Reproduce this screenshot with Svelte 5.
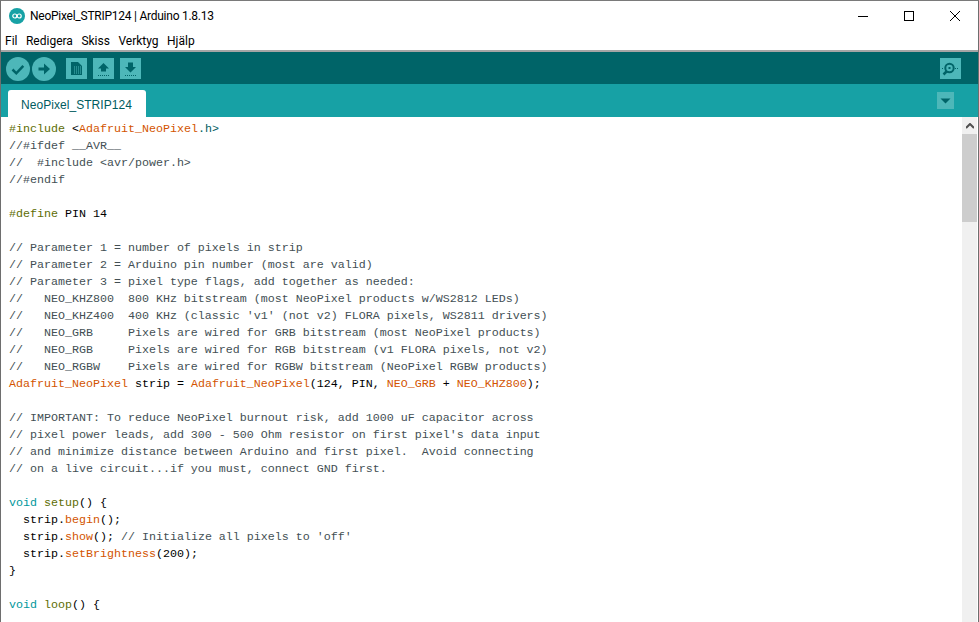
<script>
  const c = 'c', k = 'k', f = 'f', s = 's', v = 'v', t = 't';

  const code = [
    [[k, '#include'], [t, ' <'], [f, 'Adafruit_NeoPixel'], [s, '.h>']],
    [[c, '//#ifdef __AVR__']],
    [[c, '//  #include <avr/power.h>']],
    [[c, '//#endif']],
    [],
    [[k, '#define'], [t, ' PIN 14']],
    [],
    [[c, '// Parameter 1 = number of pixels in strip']],
    [[c, '// Parameter 2 = Arduino pin number (most are valid)']],
    [[c, '// Parameter 3 = pixel type flags, add together as needed:']],
    [[c, '//   NEO_KHZ800  800 KHz bitstream (most NeoPixel products w/WS2812 LEDs)']],
    [[c, "//   NEO_KHZ400  400 KHz (classic 'v1' (not v2) FLORA pixels, WS2811 drivers)"]],
    [[c, '//   NEO_GRB     Pixels are wired for GRB bitstream (most NeoPixel products)']],
    [[c, '//   NEO_RGB     Pixels are wired for RGB bitstream (v1 FLORA pixels, not v2)']],
    [[c, '//   NEO_RGBW    Pixels are wired for RGBW bitstream (NeoPixel RGBW products)']],
    [[f, 'Adafruit_NeoPixel'], [t, ' strip = '], [f, 'Adafruit_NeoPixel'], [t, '(124, PIN, '], [f, 'NEO_GRB'], [t, ' + '], [f, 'NEO_KHZ800'], [t, ');']],
    [],
    [[c, '// IMPORTANT: To reduce NeoPixel burnout risk, add 1000 uF capacitor across']],
    [[c, "// pixel power leads, add 300 - 500 Ohm resistor on first pixel's data input"]],
    [[c, '// and minimize distance between Arduino and first pixel.  Avoid connecting']],
    [[c, '// on a live circuit...if you must, connect GND first.']],
    [],
    [[v, 'void'], [t, ' '], [k, 'setup'], [t, '() {']],
    [[t, '  strip.'], [f, 'begin'], [t, '();']],
    [[t, '  strip.'], [f, 'show'], [t, '(); '], [c, "// Initialize all pixels to 'off'"]],
    [[t, '  strip.'], [f, 'setBrightness'], [t, '(200);']],
    [[t, '}']],
    [],
    [[v, 'void'], [t, ' '], [k, 'loop'], [t, '() {']],
  ];

  const menus = ['Fil', 'Redigera', 'Skiss', 'Verktyg', 'Hjälp'];
</script>

<div class="window">
  <header class="titlebar">
    <svg class="logo" viewBox="0 0 16 16" width="16" height="16">
      <circle cx="8" cy="8" r="8" fill="#17a1a5" />
      <circle cx="5.800" cy="8" r="2" fill="none" stroke="#fff" stroke-width="1.200" />
      <circle cx="10.200" cy="8" r="2" fill="none" stroke="#fff" stroke-width="1.200" />
    </svg>
    <span class="title">NeoPixel_STRIP124 | Arduino 1.8.13</span>
    <div class="controls">
      <svg viewBox="0 0 46 30" width="46" height="30"><path d="M18 15.500h10" stroke="#000" /></svg>
      <svg viewBox="0 0 46 30" width="46" height="30"><rect x="18.500" y="10.500" width="9" height="9" fill="none" stroke="#000" /></svg>
      <svg viewBox="0 0 46 30" width="46" height="30"><path d="M18 10l10 10M28 10l-10 10" stroke="#000" fill="none" /></svg>
    </div>
  </header>

  <nav class="menubar">
    {#each menus as m}
      <span>{m}</span>
    {/each}
  </nav>

  <div class="toolbar">
    <svg class="round" viewBox="0 0 24 24" width="24" height="24">
      <circle cx="12" cy="12" r="12" fill="#4db7b9" />
      <path d="M6.500 12.500l3.800 3.800 7-7.500" fill="none" stroke="#006468" stroke-width="2.500" />
    </svg>
    <svg class="round" viewBox="0 0 24 24" width="24" height="24">
      <circle cx="12" cy="12" r="12" fill="#4db7b9" />
      <path d="M6.500 10.500h5.500v-4l6 5.500-6 5.500v-4h-5.500z" fill="#006468" />
    </svg>
    <svg class="square first" viewBox="0 0 21 21" width="21" height="21">
      <rect width="21" height="21" fill="#4db7b9" />
      <path d="M5 4h7l4 4v9h-11z" fill="#006468" />
      <path d="M8 9h1M10 9h1M12 9h1M14 9h1M8 11h1M10 11h1M12 11h1M14 11h1M8 13h1M10 13h1M12 13h1M14 13h1M8 15h1M10 15h1M12 15h1M14 15h1" stroke="#4db7b9" />
    </svg>
    <svg class="square" viewBox="0 0 21 21" width="21" height="21">
      <rect width="21" height="21" fill="#4db7b9" />
      <path d="M10.500 5l5.500 5.500h-3v3h-5v-3h-3z" fill="#006468" />
      <path d="M5 17.500h11" stroke="#006468" stroke-dasharray="1 1" />
    </svg>
    <svg class="square" viewBox="0 0 21 21" width="21" height="21">
      <rect width="21" height="21" fill="#4db7b9" />
      <path d="M8 4.500h5v4.500h3l-5.500 5.500-5.500-5.500h3z" fill="#006468" />
      <path d="M5 17.500h11" stroke="#006468" stroke-dasharray="1 1" />
    </svg>
    <svg class="square monitor" viewBox="0 0 21 21" width="21" height="21">
      <rect width="21" height="21" fill="#4db7b9" />
      <circle cx="9.500" cy="10" r="4.200" fill="none" stroke="#006468" stroke-width="2" />
      <rect x="8.500" y="9" width="2" height="2" fill="#006468" />
      <path d="M6.500 13.500l-3 3" stroke="#006468" stroke-width="2.500" />
      <path d="M2 10.500h1M15 10.500h1M17 10.500h1" stroke="#006468" />
    </svg>
  </div>

  <div class="tabbar">
    <div class="tab">NeoPixel_STRIP124</div>
    <svg class="tabmenu" viewBox="0 0 17 17" width="17" height="17">
      <rect width="17" height="17" fill="#4db7b9" />
      <path d="M3.500 6.500h10l-5 5z" fill="#006468" />
    </svg>
  </div>

  <div class="editor">
    <pre class="code">{#each code as line}<div class="line">{#each line as [kind, text]}<span class={kind}>{text}</span>{/each}</div>{/each}</pre>
    <div class="scrollbar">
      <div class="arrow">
        <svg viewBox="0 0 8 6" width="8" height="6"><path d="M0 5l4-4 4 4" fill="none" stroke="#505050" stroke-width="2" /></svg>
      </div>
      <div class="thumb"></div>
    </div>
  </div>
</div>

<style>
  :global(body) {
    margin: 0;
    overflow: hidden;
  }

  .window {
    width: 979px;
    height: 622px;
    box-sizing: border-box;
    display: flex;
    flex-direction: column;
    background: #fff;
    border-top: 1px solid #7a7a7a;
    border-left: 1px solid #6e6e6e;
    border-right: 1px solid #6e6e6e;
    overflow: hidden;
  }

  .titlebar {
    height: 29px;
    display: flex;
    align-items: center;
    flex: none;
    padding-left: 8px;
  }

  .logo {
    flex: none;
  }

  .title {
    margin-left: 5px;
    font: 12px Roboto, sans-serif;
    letter-spacing: -0.25px;
    color: #000;
  }

  .controls {
    margin-left: auto;
    display: flex;
    height: 30px;
  }

  .controls svg {
    display: block;
  }

  .menubar {
    height: 19px;
    padding: 1px 0 0 4px;
    flex: none;
    display: flex;
    align-items: center;
    gap: 8.500px;
    font: 12px Roboto, sans-serif;
    color: #000;
    border-bottom: 2px solid #a5a5a5;
  }

  .toolbar {
    height: 27px;
    flex: none;
    background: #006468;
    display: flex;
    align-items: flex-start;
    padding: 5px 17px 0 5px;
    gap: 2px;
  }

  .toolbar svg {
    display: block;
    flex: none;
  }

  .square {
    margin-left: 4px;
    margin-top: 1px;
  }

  .square.first {
    margin-left: 8px;
  }

  .square.monitor {
    margin-left: auto;
  }

  .tabbar {
    height: 33px;
    flex: none;
    background: #17a1a5;
    display: flex;
    align-items: flex-end;
    padding-left: 7px;
    padding-right: 24px;
  }

  .tab {
    width: 138px;
    height: 27px;
    box-sizing: border-box;
    padding-left: 13px;
    background: #fff;
    border-radius: 3px 3px 0 0;
    color: #005c5f;
    font: 12px "Liberation Sans", sans-serif;
    line-height: 31px;
    letter-spacing: 0.05px;
  }

  .tabmenu {
    margin-left: auto;
    align-self: flex-start;
    margin-top: 8px;
  }

  .editor {
    flex: 1;
    min-height: 0;
    display: flex;
    background: #fff;
  }

  .code {
    flex: 1;
    margin: 0;
    padding: 4px 0 0 8px;
    font: 11.67px "Liberation Mono", monospace;
    overflow: hidden;
    color: #000;
  }

  .line {
    height: 17px;
    line-height: 17px;
  }

  .c { color: #434f54; }
  .k { color: #5e6d03; }
  .f { color: #d35400; }
  .s { color: #005c5f; }
  .v { color: #00979c; }
  .t { color: #000; }

  .scrollbar {
    width: 15px;
    flex: none;
    margin-right: 1px;
    background: #f0f0f0;
    display: flex;
    flex-direction: column;
  }

  .arrow {
    height: 17px;
    display: flex;
    align-items: center;
    justify-content: center;
    flex: none;
  }

  .thumb {
    height: 88px;
    background: #cdcdcd;
    flex: none;
  }
</style>
